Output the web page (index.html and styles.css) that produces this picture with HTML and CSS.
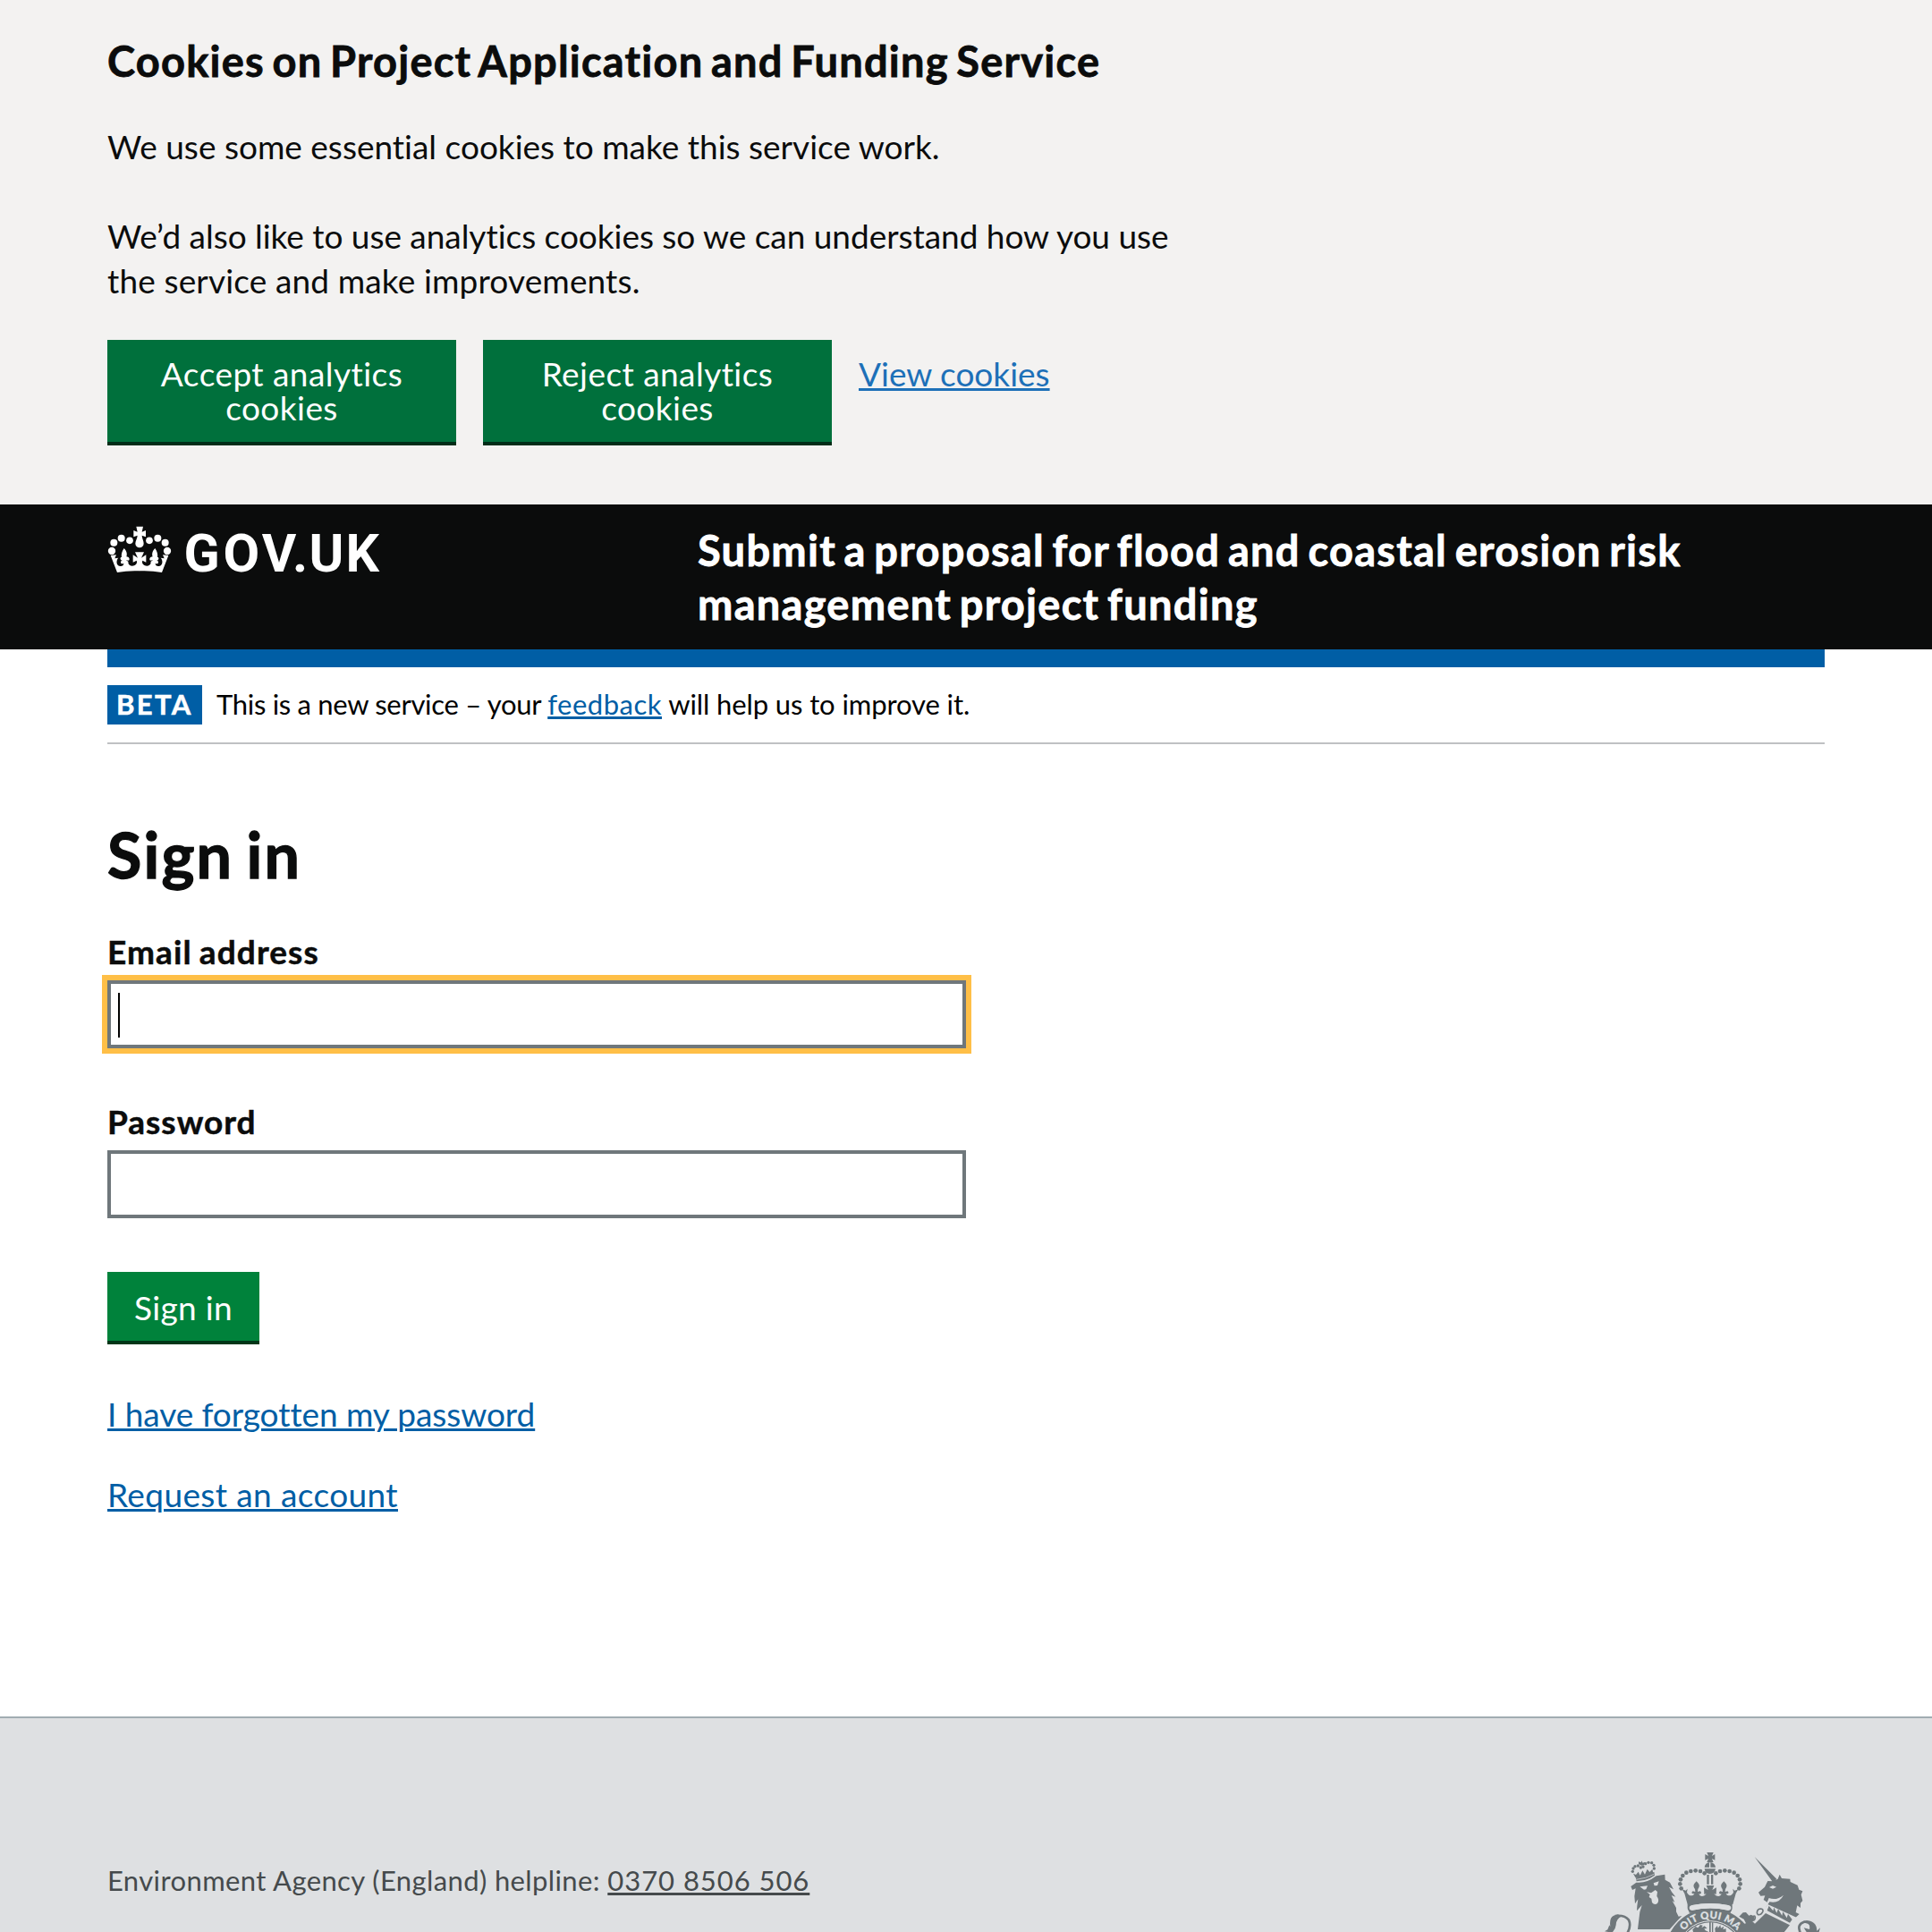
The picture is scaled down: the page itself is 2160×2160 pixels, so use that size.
FILE: index.html
```html
<!DOCTYPE html>
<html lang="en">
<head>
<meta charset="utf-8">
<title>Sign in - Project Application and Funding Service</title>
<link rel="stylesheet" href="styles.css">
</head>
<body>
<section class="cookies">
  <h2 class="cookies-title">Cookies on Project Application and Funding Service</h2>
  <p class="cookies-text">We use some essential cookies to make this service work.</p>
  <p class="cookies-text"><span class="line">We’d also like to use analytics cookies so we can understand how you use</span> <span class="line wide">the service and make improvements.</span></p>
  <div class="cookies-actions">
    <button class="button cookies-button" type="button">Accept analytics cookies</button>
    <button class="button cookies-button" type="button">Reject analytics cookies</button>
    <a class="cookies-link" href="#">View cookies</a>
  </div>
</section>

<header class="header">
  <svg class="logo" viewBox="0 0 330 80" width="330" height="80" role="img" aria-label="GOV.UK">
    <g transform="translate(-20 -15) scale(.33333)" class="crown">
      <defs>
        <g id="crown-half">
          <circle cx="75" cy="138" r="12.5"/><circle cx="82" cy="110" r="12"/><circle cx="107" cy="95" r="12"/><circle cx="135" cy="103" r="11.5"/>
          <path d="M168.500 205Q130 203 93 210L71 153 90 151 85 163 97 161C89 169 90 185 100 188 108 191 115 187 115 179 113 181 108 182 106 179 103 174 107 169 112 171 103 169 101 160 108 158 106 150 109 139 116 129 126 139 127 150 124 157 133 157 137 166 132 170 129 170 126 169 123 171 129 170 132 174 130 178 132 188 143 191 152 186 158 183 161 176 158 170L146 176V151L162 161 153 142H168.500Z"/>
        </g>
      </defs>
      <use href="#crown-half"/><use href="#crown-half" transform="matrix(-1 0 0 1 336 0)"/>
      <path d="M157 56h23l-4 18 13-5v22l-13-5c0 9 6 18 6 27a14 14 0 0 1-28 0c0-9 7-18 7-27l-13 5V69l13 5z"/>
    </g>
    <text class="logo-text" y="54" x="85.500 129.500 172.800 207 225.500 266.500">GOV.UK</text>
  </svg>
  <div class="header-title"><span class="line">Submit a proposal for flood and coastal erosion risk</span> <span class="line wide">management project funding</span></div>
</header>

<main class="main">
  <div class="phase">
    <strong class="phase-tag">BETA</strong>
    <p class="phase-text"><span class="tight">This is a new service – your </span><a class="phase-link" href="#">feedback</a> will help us to improve it.</p>
  </div>
  <h1 class="title">Sign in</h1>
  <form class="form">
    <label class="label" for="email">Email address</label>
    <div class="field focused"><input class="input" id="email" type="email"></div>
    <label class="label" for="password">Password</label>
    <div class="field"><input class="input" id="password" type="password"></div>
    <button class="button submit" type="button">Sign in</button>
  </form>
  <p class="link-row"><a href="#">I have forgotten my password</a></p>
  <p class="link-row wide"><a href="#">Request an account</a></p>
</main>

<footer class="footer">
  <p class="footer-text">Environment Agency (England) helpline: <a class="footer-link" href="#">0370 8506 506</a></p>
  <svg class="arms" viewBox="0 0 870 330" width="290" height="110" aria-hidden="true">
    <defs>
      <path id="garter-line" d="M308 404a119 119 0 0 1 238 0"/>
      <g id="royal-half">
        <g>
          <circle cx="407" cy="133" r="7"/><circle cx="393" cy="126" r="7"/><circle cx="377" cy="124" r="7"/><circle cx="361" cy="126" r="7"/><circle cx="346" cy="131" r="7"/><circle cx="334" cy="141" r="7"/><circle cx="327" cy="154" r="7"/><circle cx="325" cy="169" r="7"/><circle cx="329" cy="184" r="7"/>
        </g>
        <path d="M426 237h-76l-10-36-8-14 12 4 6-6-2 12c6 14 22 14 25 3-8 5-12-3-5-7l8 2-1-9c-8-10-5-16 5-26 10 10 13 16 5 26l-1 9 8-2c7 4 4 12-4 9 4 12 19 9 25-1l-7 3-1-23 14 8-6-15h13z"/>
      </g>
    </defs>
    <!-- royal crown -->
    <use href="#royal-half"/><use href="#royal-half" transform="matrix(-1 0 0 1 852 0)"/>
    <path d="M415 63h22l-5 12 10-6v20l-10-5 5 12h-22l5-12-11 5V69l11 6zM425 96c12 1 18 8 19 17h-37c1-9 7-16 18-17zM407 118h37c-2 11-8 17-19 17s-16-6-18-17zM415 138h7v32h-7zM429 138h7v32h-7z"/>
    <path class="arms-line" d="M425 97v18"/>
    <path d="M350 236h150v14c0 8-6 12-6 16H356c0-6-6-9-6-16z"/>
    <path class="arms-bg" d="M366 240q60-12 120 0 10 2 10 9 0 8-10 8-60-13-120 0-10 0-10-8 0-7 10-9z"/>
    <!-- garter -->
    <path d="M274 404a153 153 0 0 1 306 0z"/>
    <path class="arms-bg" d="M366 240q60-12 120 0 8 2 8 8 0 9-8 9-60-13-120 0-8 0-8-9 0-6 8-8z"/>
    <circle class="arms-ring" cx="427" cy="404" r="111"/>
    <circle class="arms-bg" cx="427" cy="404" r="106"/>
    <path d="M423 296h5v34h-5zM432 298h4v32h-4zM367 322l10-10 8 4 8-10 8 2-4 8 10-6 9 8-10 1 4 6 11 5h-52zM442 318l8-9 2 8 8-10 2 10 10-6-3 10 10-2v11h-36z"/>
    <text class="motto" text-anchor="middle"><textPath href="#garter-line" startOffset="50%">OIT QUI MA</textPath></text>
    <!-- lion -->
    <path d="M176 148q32-3 62-20l2 12-16 10q-22 10-45 10z"/>
    <path class="arms-line thin" d="M178 154q32-3 60-18"/>
    <path d="M175 147l-7-13 9 4 8-10 6 12 8-16 8 13 8-18 8 10 9-10 3 14-28 14z"/>
    <circle cx="166" cy="127" r="5"/><circle cx="168" cy="117" r="5"/><circle cx="174" cy="110" r="5"/><circle cx="184" cy="108" r="5"/><circle cx="193" cy="114" r="5"/><circle cx="201" cy="111" r="5"/><circle cx="209" cy="101" r="5"/><circle cx="219" cy="97" r="5"/><circle cx="230" cy="98" r="5"/><circle cx="237" cy="106" r="5"/><circle cx="238" cy="117" r="5"/>
    <path d="M186 94l8 3 2-6 4 7 8-3-4 10-9 2-9-5z"/>
    <path d="M160 177l18-13q34 4 67-22l29-5 1 18 16 9 12 23-15-8 9 17 13 16-14-5 11 23-8-4 13 23v13l8 16 11-2-14 15-27 30H183l7-58 7-23-17 19 1-17 3-22-10 15-2-25 4-26-11 5z"/>
    <path class="arms-bg" d="M190 178l26-3-5 12-7 1zM236 166l18-6-5 14-10 1zM213 196l15 3 14-10 7 6-2 15q10 13 2 24-10 8-18-3l-2-13-8-5 3-9z"/>
    <path class="arms-tail" d="M148 334q14-24 5-44-14-18-46-14"/>
    <path d="M72 328l10-6 6-15 3 5q-4-30 11-37l18-5-10 10 20-3q-20 9-20 30-1 14-13 25z"/>
    <!-- unicorn -->
    <path d="M575 78l74 74-13 11zM636 160l17-8 6-15 7 13 28 2 1 10 24 11 5 15 12 5-5 12 5 20-7 8v16l-11-8-5 23 12 6-17 16-94-40 11-17q32 7 47-23-24 20-49 10l-6 14-12-8 5-14-15 1-7-12 21-18 10-20z"/>
    <path class="arms-bg" d="M624 180l12-6 12 5-12 6z"/>
    <path class="arms-bg" d="M617 236l100 46-20 27-87-44z"/>
    <path d="M623 242l14 17 3-11 9 18 5-13 13 22 3-13 13 21 4-13 14 18-8 11-76-41z"/>
    <path d="M612 267l81 40-20 25H535l-16-23 27-8-7-14-16-9 13-13 10-1 10 11 7-3 12 6-2 10-5 7 8 7z"/>
    <path class="arms-tail thin" d="M583 265q1-13 13-13 10 2 6 11-6 11-15 9-4-2-4-7M566 281q10-10 11 0-1 13-11 10z"/>
    <path class="arms-tail" d="M728 332q-12-28 13-36 24-4 36 34"/>
    <path d="M741 291q42-2 43 35l11-10-4 14h-42l-9-14 19 5q4-17-14-30z"/>
  </svg>
</footer>
</body>
</html>
```
FILE: styles.css
```css
* { box-sizing: border-box; }

html, body { margin: 0; height: 2160px; overflow: hidden; }

body {
  background: #fff;
  color: #0b0c0c;
  font-family: Lato, "Open Sans", sans-serif;
  font-size: 37px;
  line-height: 50px;
  font-variant-ligatures: none;
}

h1, h2, p { margin: 0; }

a {
  color: #005ea5;
  text-decoration: underline;
  text-decoration-thickness: 3px;
  text-underline-offset: 2px;
}

.line { display: block; white-space: nowrap; }

.button {
  display: block;
  border: 0;
  border-bottom: 4px solid #002d18;
  border-radius: 0;
  color: #fff;
  background: #00703c;
  font: inherit;
  line-height: 38px;
  text-align: center;
}

/* Cookie banner */
.cookies { height: 564px; padding: 38px 120px 0; background: #f3f2f1; }
.cookies-title {
  margin-bottom: 41px;
  font-size: 47px;
  line-height: 60px;
  letter-spacing: 1.210px;
  word-spacing: -4px;
  -webkit-text-stroke: .8px currentColor;
}
.cookies-text { margin-bottom: 50px; }
.cookies-text + .cookies-text { margin-bottom: 41px; letter-spacing: -.03px; }
.cookies-text .wide { letter-spacing: .14px; }
.cookies-actions { display: flex; align-items: flex-start; gap: 30px; }
.cookies-button { width: 390px; height: 118px; padding: 19px 40px 21px; letter-spacing: .45px; }
.cookies-link { margin-top: 19px; line-height: 38px; color: #1d70b8; }

/* Header */
.header {
  display: grid;
  grid-template-columns: 660px 1fr;
  height: 162px;
  padding: 21px 120px 0;
  background: #0b0c0c;
  color: #fff;
}
.logo { display: block; fill: #fff; overflow: visible; }
.logo-text { font: 700 59px Roboto, sans-serif; }
.header-title {
  font-size: 47px;
  font-weight: 700;
  line-height: 60px;
  letter-spacing: 1.260px;
  word-spacing: -4px;
  -webkit-text-stroke: .8px currentColor;
}
.header-title .wide { letter-spacing: 1.280px; }

/* Content */
.main { margin: 0 120px; height: 1193px; border-top: 20px solid #005ea5; }
.phase {
  display: flex;
  align-items: flex-start;
  gap: 16px;
  height: 86px;
  padding-top: 20px;
  border-bottom: 2px solid #bfc1c3;
  font-size: 31px;
  line-height: 42px;
  color: #000;
}
.phase-text { letter-spacing: -.1px; }
.phase-tag { width: 106px; height: 44px; padding-left: 10px; color: #fff; background: #005ea5; letter-spacing: 2.400px; -webkit-text-stroke: .5px currentColor; }
.tight { letter-spacing: -.3px; }
.phase-link { letter-spacing: .5px; }

.title {
  margin-top: 83px;
  font-size: 70px;
  line-height: 80px;
  letter-spacing: 2.200px;
  word-spacing: -5px;
  -webkit-text-stroke: 1.300px currentColor;
}

.form { margin-top: 44px; width: 960px; }
.label { display: block; margin-bottom: 7px; font-weight: 700; letter-spacing: 1.100px; word-spacing: -2px; -webkit-text-stroke: .5px currentColor; }
.field + .label { letter-spacing: 1px; }
.field { position: relative; height: 76px; margin-bottom: 57px; }
.input { display: block; width: 100%; height: 76px; margin: 0; padding: 10px; border: 4px solid #6f777b; border-radius: 0; background: #fff; outline: 0; }
.focused .input { outline: 6px solid #ffbf47; }
.focused::after { content: ""; position: absolute; left: 12px; top: 14px; width: 2px; height: 50px; background: #000; }
.submit { width: 170px; height: 81px; margin-top: 60px; padding: 21px 0 18px; background: #00823b; border-color: #003618; letter-spacing: .3px; }

.link-row { margin-top: 40px; letter-spacing: -.07px; }
.form + .link-row { margin-top: 53px; }
.link-row.wide { letter-spacing: .39px; }

/* Footer */
.footer {
  display: flex;
  justify-content: space-between;
  height: 241px;
  padding: 0 100px 0 120px;
  border-top: 2px solid #a1acb2;
  background: #dee0e2;
  color: #454a4c;
}
.footer-text { padding-top: 161px; font-size: 31px; line-height: 40px; letter-spacing: .39px; }
.footer-link { color: inherit; letter-spacing: .95px; }

.arms { display: block; margin-top: 129px; fill: #6f777b; }
.arms-bg { fill: #dee0e2; }
.arms-ring { fill: none; stroke: #dee0e2; stroke-width: 3px; }
.arms-line { fill: none; stroke: #dee0e2; stroke-width: 4px; }
.arms-line.thin { stroke-width: 2px; }
.arms-tail { fill: none; stroke: #6f777b; stroke-width: 8px; }
.arms-tail.thin { stroke-width: 5px; }
.motto { fill: #dee0e2; stroke: #dee0e2; stroke-width: .8px; font: 900 34px Lato, sans-serif; letter-spacing: 1px; }
```
